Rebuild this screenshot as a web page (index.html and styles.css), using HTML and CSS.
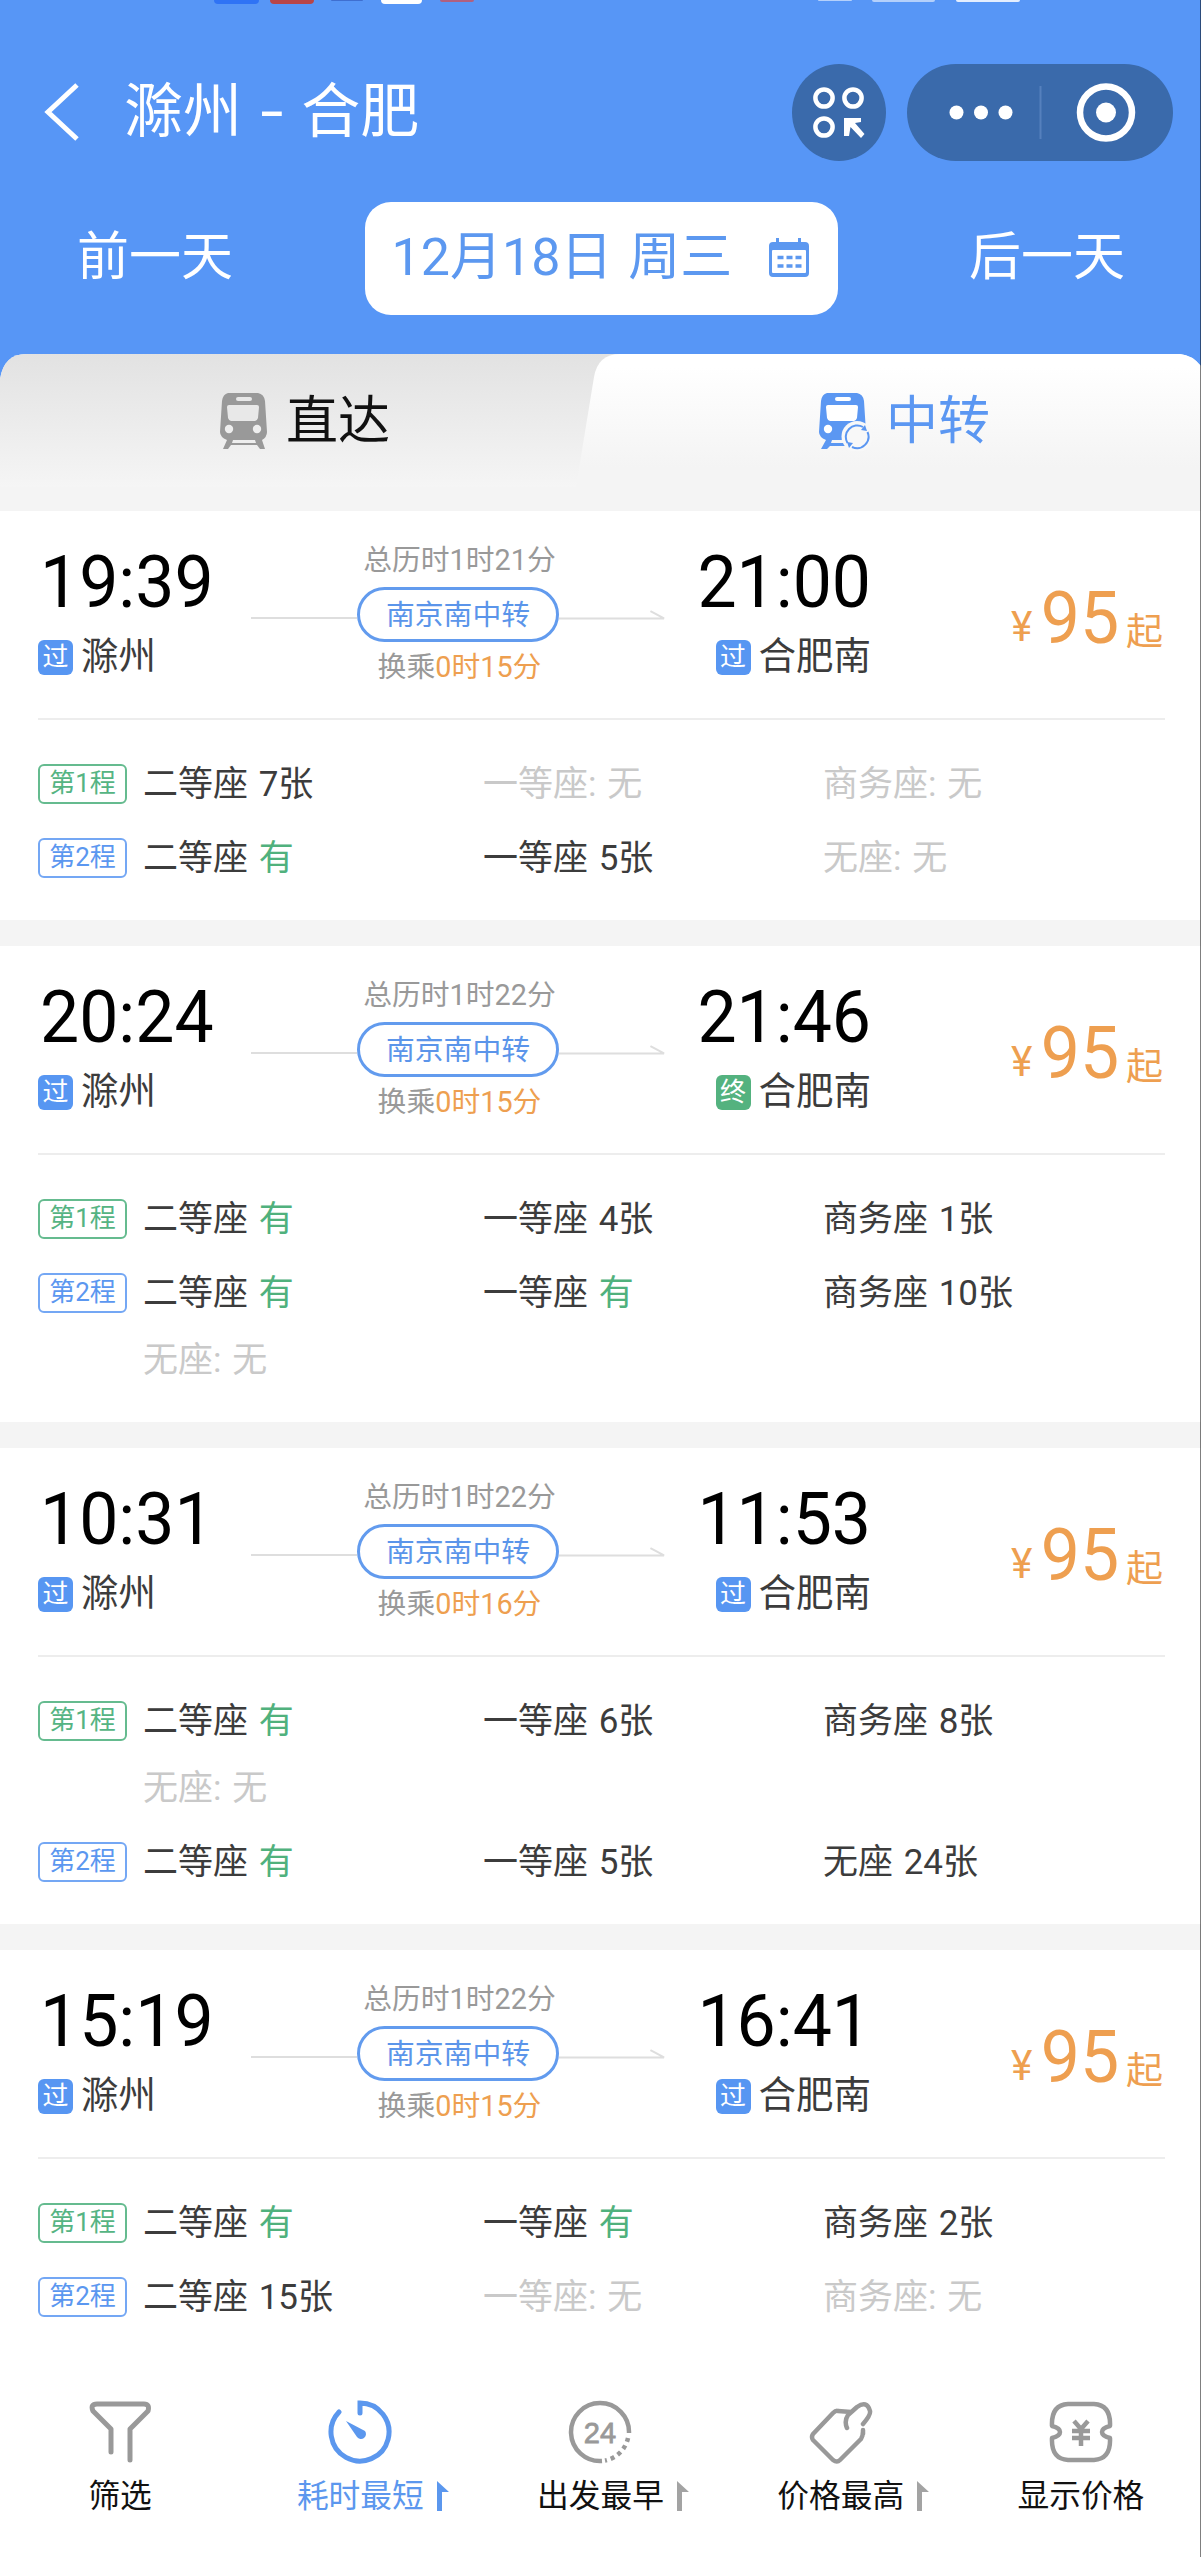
FILE: index.html
```html
<!DOCTYPE html>
<html lang="zh-CN"><head><meta charset="utf-8"><title>滁州 - 合肥</title><link rel="stylesheet" href="styles.css"></head>
<body>
<svg class="defs" width="0" height="0">
<symbol id="arrow" viewBox="0 0 110 10"><path d="M0 8.500H108L94 1" fill="none" stroke="#dedede" stroke-width="2"/></symbol>
<symbol id="sort" viewBox="0 0 12 30"><path d="M0 0L12 11H5V30H0Z" fill="currentColor"/></symbol>
</svg>
<div class="page">
<header class="header">
  <div class="status"><i class="s1"></i><i class="s2"></i><i class="s3"></i><i class="s4"></i><i class="s5"></i><i class="s7"></i><i class="s8"></i><i class="s6"></i></div>
  <div class="titlebar">
    <svg class="back" width="36" height="58" viewBox="0 0 36 58"><path d="M33 2L4 29L33 56" fill="none" stroke="#fff" stroke-width="5"/></svg>
    <h1 class="title">滁州 <span class="dash">-</span> 合肥</h1>
    <svg class="scan" width="94" height="97" viewBox="0 0 94 97"><ellipse cx="47" cy="48.500" rx="47" ry="48.500" fill="#3a6aab"/><g fill="none" stroke="#fff" stroke-width="4.500"><circle cx="32" cy="34" r="8.600"/><circle cx="61" cy="34" r="8.600"/><circle cx="32" cy="63" r="8.600"/></g><path d="M52 54H69V58L63 59L72.500 70L69 74L58.500 63L57 72H52Z" fill="#fff"/></svg>
    <svg class="capsule" width="266" height="97" viewBox="0 0 266 97"><rect width="266" height="97" rx="48.500" fill="#3a6aab"/><g fill="#fff"><circle cx="49.500" cy="48.500" r="7"/><circle cx="74" cy="48.500" r="7"/><circle cx="98.500" cy="48.500" r="7"/><circle cx="199" cy="48.500" r="10"/></g><path d="M133.500 22V75" stroke="#5580bd" stroke-width="2"/><circle cx="199" cy="48.500" r="26" fill="none" stroke="#fff" stroke-width="6.500"/></svg>
  </div>
  <div class="dates">
    <span class="day">前一天</span>
    <div class="datebox"><span>12月18日 周三</span>
      <svg width="42" height="40" viewBox="0 0 42 40"><path d="M8 0h3v4h19V0h3v4h4a4 4 0 0 1 4 4v27a4 4 0 0 1-4 4H5a4 4 0 0 1-4-4V8a4 4 0 0 1 4-4h3Z" fill="#5c98f0"/><rect x="4" y="12" width="34" height="23" rx="1" fill="#fff"/><path d="M9.500 19.500h24M9.500 28h24" stroke="#5c98f0" stroke-width="3.500" stroke-dasharray="6 3"/></svg>
    </div>
    <span class="day">后一天</span>
  </div>
</header>
<nav class="tabs">
  <svg class="tabshape" width="1201" height="157" viewBox="0 0 1201 157"><defs><linearGradient id="g1" x1="0" y1="0" x2="0" y2="1"><stop offset="0" stop-color="#e2e2e2"/><stop offset="1" stop-color="#f5f5f5"/></linearGradient><linearGradient id="g2" x1="0" y1="0" x2="0" y2="1"><stop offset="0.100" stop-color="#fff"/><stop offset="0.850" stop-color="#f4f4f4"/></linearGradient></defs><rect width="1201" height="157" fill="#5796f6"/><path d="M0 157V25Q4 0 26 0H1180Q1192 1 1201 12V157Z" fill="#f4f4f4"/><path d="M0 133V25Q4 0 26 0H640V133Z" fill="url(#g1)"/><path d="M576 133L594 23Q598 0 620 0H1180Q1192 1 1201 12V133Z" fill="url(#g2)"/></svg>
  <div class="tab direct"><svg width="50" height="58" viewBox="0 0 50 58"><path d="M9 0H39Q45 1 46 8L48 39Q48 44 43 47L46 56H41L38 52H12L9 56H4L8 47Q1 44 1 39L3 8Q4 1 9 0Z" fill="#999"/><rect x="17" y="4" width="16" height="4" rx="2" fill="#e8e8e8"/><path d="M8 14Q8 12 10 12H38Q40 12 40 14L39 25Q38 28 36 28H12Q10 28 9 25Z" fill="#e8e8e8"/><circle cx="10" cy="36" r="4.200" fill="#eee"/><circle cx="38" cy="36" r="4.200" fill="#eee"/><path d="M14 47H36L37 50H13Z" fill="#eee"/></svg><span>直达</span></div>
  <div class="tab transfer"><svg width="54" height="58" viewBox="0 0 54 58"><path d="M9 0H39Q45 1 46 8L48 39Q48 44 43 47L44 53H12L9 56H3L8 47Q1 44 1 39L3 8Q4 1 9 0Z" fill="#5b97f2"/><rect x="17" y="4" width="16" height="4" rx="2" fill="#fff"/><path d="M8 14Q8 12 10 12H38Q40 12 40 14L39 25Q38 28 36 28H12Q10 28 9 25Z" fill="#fff"/><circle cx="10" cy="36" r="4.200" fill="#fff"/><path d="M14 47H26V50H13Z" fill="#f6f6f6"/><circle cx="39" cy="43.500" r="15.500" fill="#f8f8f8"/><path d="M29.500 50A11.500 11.500 0 0 1 45 34M49.500 39A11.500 11.500 0 0 1 34 54" fill="none" stroke="#5b97f2" stroke-width="2"/><path d="M43 37L49 38L47 32ZM35 50L29 49L31 55Z" fill="#5b97f2"/></svg><span>中转</span></div>
</nav>
<main class="list" id="list"></main>
<footer class="toolbar">
  <div class="tool"><svg width="62" height="64" viewBox="0 0 62 64"><path d="M22 52V29L4 11Q1 4 8 4H55Q61 4 59 11L41 29V60" fill="none" stroke="#999" stroke-width="5" stroke-linecap="round" stroke-linejoin="round"/></svg><span class="label">筛选</span></div>
  <div class="tool active"><svg width="64" height="64" viewBox="0 0 64 64"><path d="M11 12A29 29 0 1 0 32 3V13" fill="none" stroke="#5b97ee" stroke-width="5" stroke-linecap="round"/><path d="M18 21L37 31A5 5 0 1 1 29 37Z" fill="#5b97ee"/></svg><span class="label">耗时最短<svg class="sort"><use href="#sort"/></svg></span></div>
  <div class="tool"><svg width="64" height="64" viewBox="0 0 64 64"><path d="M34 61A29 29 0 1 1 61 33" fill="none" stroke="#999" stroke-width="4.500"/><path d="M60 38A29 29 0 0 1 37 60.500" fill="none" stroke="#999" stroke-width="4.500" stroke-dasharray="4 4"/><text class="clock" x="32" y="43" text-anchor="middle">24</text></svg><span class="label">出发最早<svg class="sort"><use href="#sort"/></svg></span></div>
  <div class="tool"><svg width="64" height="64" viewBox="0 0 64 64"><path d="M42 12L29 11Q27 10 24 13L4 34Q2 37 4 40L24 60Q28 63 31 60L52 39Q54 36 54 31M54 24Q62 15 61 11Q58 0 48 7L39 15Q35 21 38 28M54 30V34" fill="none" stroke="#999" stroke-width="4.500" stroke-linecap="round" stroke-linejoin="round"/></svg><span class="label">价格最高<svg class="sort"><use href="#sort"/></svg></span></div>
  <div class="tool"><svg width="64" height="64" viewBox="0 0 64 64"><path d="M3 26Q2 5 19 4H45Q62 5 61 26Q53 28 53 32Q53 36 61 38Q62 59 45 60H19Q2 59 3 38Q11 36 11 32Q11 28 3 26ZM25 21L32 29L39 21M23 31H41M23 38H41M32 29V46" fill="none" stroke="#999" stroke-width="4.500" stroke-linejoin="round"/></svg><span class="label">显示价格</span></div>
</footer>
</div>
<script src="app.js"></script>
</body></html>
```
FILE: styles.css
```css
* { box-sizing: border-box; }
body { margin: 0; background: #fff; font-family: Roboto, "Noto Sans CJK SC", sans-serif; color: #3c3c3c; }
.page { position: relative; width: 1201px; height: 2557px; overflow: hidden; display: flex; flex-direction: column; }
.page::after { content: ""; position: absolute; right: 0; top: 0; width: 1px; height: 100%; background: rgba(0,0,0,.5); }
.defs { position: absolute; }
svg { flex: none; display: block; }
.header { height: 354px; flex: none; background: #5796f6; color: #fff; }
.status { height: 5px; display: flex; align-items: flex-start; padding-left: 214px; }
.status i { display: block; border-radius: 0 0 5px 5px; }
.s1 { width: 45px; height: 4px; background: #2f73f5; }
.s2 { width: 44px; height: 4px; background: #b84548; margin-left: 11px; }
.s3 { width: 32px; height: 1px; background: #3f6fd0; margin-left: 17px; }
.s4 { width: 41px; height: 4px; background: #fff; margin-left: 18px; }
.s5 { width: 34px; height: 2px; background: #b06080; margin-left: 18px; }
.s7 { width: 34px; height: 1px; background: #b4d0fb; margin-left: 344px; }
.s8 { width: 63px; height: 2px; background: #b4d0fb; margin-left: 20px; }
.s6 { width: 64px; height: 2px; background: #e4eefe; margin-left: 21px; }
.titlebar { height: 214px; display: flex; align-items: center; padding: 0 28px 0 44px; }
.title { margin: 0 auto 0 44px; font-size: 59px; font-weight: 400; line-height: 80px; white-space: pre; }
.dash { display: inline-block; width: 30px; transform: scaleX(1.4); text-align: center; }
.scan { margin-right: 21px; }
.dates { height: 113px; margin-top: -17px; display: flex; justify-content: space-between; align-items: center; padding: 0 76px 0 77px; font-size: 52px; }
.day { line-height: 76px; padding-bottom: 2px; }
.datebox { width: 473px; height: 113px; border-radius: 26px; background: #fff; color: #5c98f0; display: flex; align-items: center; justify-content: space-between; padding: 0 28px 2px 27px; white-space: nowrap; }
.datebox span { line-height: 76px; word-spacing: 3px; }
.tabs { height: 157px; flex: none; position: relative; display: flex; }
.tabshape { position: absolute; inset: 0; }
.tab { position: relative; display: flex; align-items: center; height: 135px; gap: 17px; font-size: 52px; color: #111; }
.tab span { line-height: 76px; }
.direct { width: 600px; padding-left: 219px; }
.transfer { padding-left: 218px; color: #5b97f2; gap: 14px; }
.list { background: #f4f4f4; display: flex; flex-direction: column; gap: 26px; flex: none; height: 1859px; overflow: hidden; }
.card { background: #fff; padding: 0 36px 28px 38px; flex: none; }
.card:last-child { flex: 1; }
.trip { height: 207px; display: grid; grid-template-columns: 214px 415px 204px 1fr; }
.stop { padding-top: 28px; }
.stop.to { text-align: right; }
.time { font-size: 73px; line-height: 86px; height: 86px; color: #000; transform: scaleX(.955); transform-origin: left; margin-left: 2px; }
.to .time { transform-origin: right; margin-left: 0; }
.station { display: flex; align-items: center; gap: 8px; font-size: 37.500px; line-height: 56px; height: 56px; margin-top: 3px; }
.to .station { justify-content: flex-end; }
.badge { width: 35px; height: 35px; border-radius: 6px; background: #5796f2; color: #fff; font-size: 26px; line-height: 35px; text-align: center; margin-top: 3px; }
.badge.end { background: #54b27f; }
.via { display: flex; flex-direction: column; align-items: center; padding-top: 29px; font-size: 28.800px; line-height: 40px; color: #999; }
.track { display: flex; align-items: center; width: 415px; margin: 7px 0 5px -2px; }
.track::before { content: ""; width: 106px; height: 2px; margin-top: 7px; background: #dedede; }
.pill { width: 202px; height: 55px; border: 3.500px solid #629bee; border-radius: 28px; color: #5b95ea; line-height: 51px; text-align: center; }
.arrow { width: 107px; height: 10px; }
.orange, .price { color: #ee9f50; }
.price { display: flex; justify-content: flex-end; align-items: baseline; padding: 64px 2px 0 0; white-space: nowrap; font-size: 37px; line-height: 86px; }
.yen { transform: scale(1.1, 1.15); transform-origin: 50% 78%; }
.num { display: inline-block; font-size: 73px; margin: 0 5px 0 7px; transform: scaleX(.955); }
.price .qi { position: relative; top: 2px; }
.seats { border-top: 2px solid #ededed; padding-top: 31px; display: flex; flex-direction: column; gap: 7px; }
.leg { display: flex; }
.tag { width: 89px; height: 40px; margin: 13px 16px 0 0; flex: none; border: 2px solid #65bb8f; border-radius: 6px; color: #55b483; font-size: 26px; line-height: 35px; text-align: center; }
.leg:nth-child(2) .tag { border-color: #74a7f4; color: #5b97f0; }
.grid { flex: 1; display: grid; grid-template-columns: repeat(3, 340px); font-size: 35px; line-height: 67px; white-space: pre; word-spacing: 2px; }
.grid span { height: 67px; }
.none { color: #c9c9c9; }
.grid b { font-weight: 400; color: #50b17d; }
.toolbar { flex: 1; background: #fff; display: grid; grid-template-columns: repeat(5, 1fr); padding-top: 30px; }
.tool { display: flex; flex-direction: column; align-items: center; color: #111; font-size: 31.700px; }
.label { position: relative; line-height: 46px; margin-top: 10px; }
.active .label { color: #5b97ee; }
.sort { position: absolute; left: calc(100% + 13px); top: 7px; width: 12px; height: 30px; color: #a3a3a3; }
.active .sort { color: #5b97ee; }
.clock { font: 500 29px "Liberation Sans", sans-serif; fill: #999; stroke: #999; stroke-width: .8; }
```
FILE: app.js
```js
const trips = [
  { dep: '19:39', arr: '21:00', total: '1时21分', wait: '0时15分', legs: [['二等座 7张', '一等座: 无', '商务座: 无'], ['二等座 有', '一等座 5张', '无座: 无']] },
  { dep: '20:24', arr: '21:46', end: true, total: '1时22分', wait: '0时15分', legs: [['二等座 有', '一等座 4张', '商务座 1张'], ['二等座 有', '一等座 有', '商务座 10张', '无座: 无']] },
  { dep: '10:31', arr: '11:53', total: '1时22分', wait: '0时16分', legs: [['二等座 有', '一等座 6张', '商务座 8张', '无座: 无'], ['二等座 有', '一等座 5张', '无座 24张']] },
  { dep: '15:19', arr: '16:41', total: '1时22分', wait: '0时15分', legs: [['二等座 有', '一等座 有', '商务座 2张'], ['二等座 15张', '一等座: 无', '商务座: 无']] }
];
const seat = s => `<span class="${s.endsWith('无') ? 'none' : ''}">${s.replace(/有$/, '<b>有</b>')}</span>`;
document.getElementById('list').innerHTML = trips.map(t => `
<section class="card"><div class="trip">
<div class="stop"><div class="time">${t.dep}</div><div class="station"><span class="badge">过</span>滁州</div></div>
<div class="via"><div>总历时${t.total}</div><div class="track"><span class="pill">南京南中转</span><svg class="arrow"><use href="#arrow"/></svg></div><div>换乘<span class="orange">${t.wait}</span></div></div>
<div class="stop to"><div class="time">${t.arr}</div><div class="station"><span class="badge ${t.end ? 'end' : ''}">${t.end ? '终' : '过'}</span>合肥南</div></div>
<div class="price"><span class="yen">¥</span><span class="num">95</span><span class="qi">起</span></div>
</div><div class="seats">${t.legs.map((l, i) => `<div class="leg"><span class="tag">第${i + 1}程</span><div class="grid">${l.map(seat).join('')}</div></div>`).join('')}</div></section>`).join('');
```
